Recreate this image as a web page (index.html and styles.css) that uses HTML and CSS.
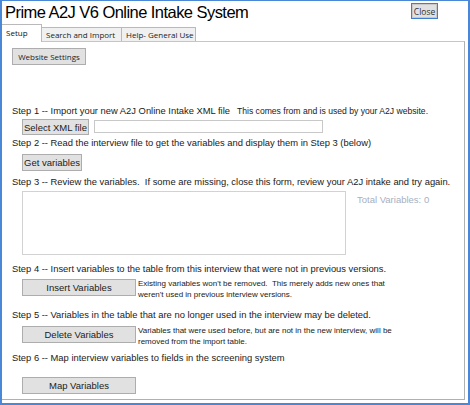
FILE: index.html
```html
<!DOCTYPE html>
<html>
<head>
<meta charset="utf-8">
<link rel="stylesheet" href="styles.css">
</head>
<body>
<div class="window">
  <div class="titlebar">
    <div class="title">Prime A2J V6 Online Intake System</div>
    <button class="close-btn">Close</button>
  </div>
  <div class="tabs">
    <div class="tab tab-active">Setup</div>
    <div class="tab tab-search">Search and Import</div>
    <div class="tab tab-help">Help- General Use</div>
  </div>
  <div class="panel">
    <button class="btn btn-ui btn-website">Website Settings</button>

    <div class="step step1"><span>Step 1 -- Import your new A2J Online Intake XML file</span><span class="note">This comes from and is used by your A2J website.</span></div>
    <div class="row row-xml">
      <button class="btn btn-xml">Select XML file</button>
      <div class="textbox"></div>
    </div>

    <div class="step step2">Step 2 -- Read the interview file to get the variables and display them in Step 3 (below)</div>
    <div class="row row-get">
      <button class="btn btn-get">Get variables</button>
    </div>

    <div class="step step3">Step 3 -- Review the variables.&nbsp; If some are missing, close this form, review your A2J intake and try again.</div>
    <div class="row row-list">
      <div class="listbox"></div>
      <div class="total">Total Variables: 0</div>
    </div>

    <div class="step step4">Step 4 -- Insert variables to the table from this interview that were not in previous versions.</div>
    <div class="row row-action row-insert">
      <button class="btn btn-wide">Insert Variables</button>
      <div class="desc">Existing variables won't be removed.&nbsp; This merely adds new ones that<br>weren't used in previous interview versions.</div>
    </div>

    <div class="step step5">Step 5 -- Variables in the table that are no longer used in the interview may be deleted.</div>
    <div class="row row-action row-delete">
      <button class="btn btn-wide">Delete Variables</button>
      <div class="desc">Variables that were used before, but are not in the new interview, will be<br>removed from the import table.</div>
    </div>

    <div class="step step6">Step 6 -- Map interview variables to fields in the screening system</div>
    <div class="row row-action row-map">
      <button class="btn btn-wide">Map Variables</button>
    </div>
  </div>
</div>
</body>
</html>
```

FILE: styles.css
```css
* { box-sizing: border-box; }
html, body { margin: 0; padding: 0; background: #ffffff; }
body { font-family: "Liberation Sans", Arial, sans-serif; color: #1a1a1a; }

.window {
  width: 470px;
  height: 405px;
  border: 2px solid #4a87d6;
  border-top-width: 1px;
  background: #ffffff;
  display: flex;
  flex-direction: column;
}

.titlebar {
  height: 23px;
  display: flex;
  align-items: flex-start;
  justify-content: space-between;
  padding: 0 30px 0 3px;
}
.title {
  font-size: 16.5px;
  letter-spacing: -0.55px;
  line-height: 20px;
  margin-top: 1px;
  color: #000;
}
.close-btn {
  margin-top: 2px;
  width: 27px;
  height: 16px;
  padding: 0;
  font-family: "Open Sans", "DejaVu Sans", sans-serif;
  font-size: 8.5px;
  color: #333;
  background: #e1e1e1;
  border: 1px solid #3f7fd2;
  box-shadow: inset 0 0 0 1px #c9c9c9;
  border-radius: 0;
}

.tabs {
  display: flex;
  align-items: flex-end;
  height: 17px;
  position: relative;
  z-index: 1;
}
.tab {
  font-family: "Open Sans", "DejaVu Sans", sans-serif;
  font-size: 8px;
  color: #222;
  height: 14px;
  line-height: 13px;
  padding: 0 0 0 4px;
  background: #f0f0f0;
  border: 1px solid #b9b9b9;
  border-bottom: none;
  border-left: none;
}
.tab-search { width: 80px; }
.tab-help { width: 74px; }
.tab-active {
  background: #ffffff;
  height: 18px;
  line-height: 15px;
  width: 40px;
  padding: 0 4px;
  margin-bottom: -1px;
  color: #111;
}

.panel {
  flex: 1;
  margin-right: 3px;
  margin-bottom: 3px;
  border-top: 1px solid #c6c6c6;
  border-right: 1px solid #b0b0b0;
  border-bottom: 1px solid #b0b0b0;
  padding: 6px 0 0 10px;
  display: flex;
  flex-direction: column;
  align-items: flex-start;
}

.btn {
  font-family: "Liberation Sans", Arial, sans-serif;
  font-size: 9.5px;
  color: #222;
  background: #e1e1e1;
  border: 1px solid #adadad;
  border-radius: 0;
  padding: 0;
  height: 16px;
}
.btn-ui {
  font-family: "Open Sans", "DejaVu Sans", sans-serif;
  font-size: 8px;
  height: 17px;
  padding: 0 4px;
  width: 74px;
}

.step {
  font-size: 9.4px;
  line-height: 12px;
  white-space: nowrap;
  color: #1a1a1a;
}
.note {
  font-size: 8.6px;
  margin-left: 7px;
}
.step1 { margin-top: 40px; }
.step2 { margin-top: 2px; }
.step3 { margin-top: 5px; }
.step4 { margin-top: 8px; }
.step5 { margin-top: 9px; }
.step6 { margin-top: 5px; }

.row {
  display: flex;
  align-items: flex-start;
  padding-left: 10px;
}
.row-xml { margin-top: 2px; }
.btn-xml { width: 67px; height: 16px; }
.textbox {
  width: 229px;
  height: 13px;
  margin-left: 5px;
  margin-top: 1px;
  border: 1px solid #c8c8c8;
  background: #fff;
}
.row-get { margin-top: 5px; }
.btn-get { width: 60px; height: 17px; }

.row-list { margin-top: 3px; }
.listbox {
  width: 324px;
  height: 64px;
  border: 1px solid #d2d2d2;
  background: #fff;
}
.total {
  font-size: 9.5px;
  color: #a6b0c2;
  margin-left: 11px;
  margin-top: 3px;
}

.btn-wide { width: 114px; height: 17px; }
.desc {
  font-size: 8px;
  line-height: 11px;
  margin-left: 2px;
  margin-top: -1px;
  white-space: nowrap;
  color: #1a1a1a;
}
.row-insert { margin-top: 4px; }
.row-delete { margin-top: 5px; }
.row-map { margin-top: 13px; }
```
